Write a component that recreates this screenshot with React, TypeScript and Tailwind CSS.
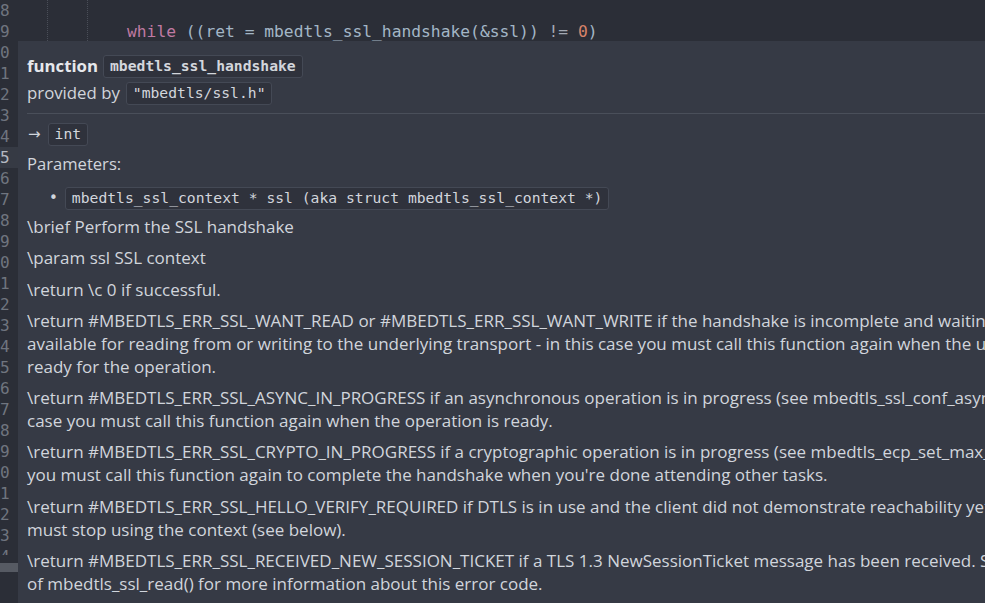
import React from "react";

const gutterDigits = ["8","9","0","1","2","3","4","5","6","7","8","9","0","1","2","3","4","5","6","7","8","9","0","1","2","3","4"];

const paras: string[][] = [
  ["\\brief Perform the SSL handshake"],
  ["\\param ssl SSL context"],
  ["\\return \\c 0 if successful."],
  [
    "\\return #MBEDTLS_ERR_SSL_WANT_READ or #MBEDTLS_ERR_SSL_WANT_WRITE if the handshake is incomplete and waiting for data to be",
    "available for reading from or writing to the underlying transport - in this case you must call this function again when the underlying transport is",
    "ready for the operation.",
  ],
  [
    "\\return #MBEDTLS_ERR_SSL_ASYNC_IN_PROGRESS if an asynchronous operation is in progress (see mbedtls_ssl_conf_async_private_cb()) - in this",
    "case you must call this function again when the operation is ready.",
  ],
  [
    "\\return #MBEDTLS_ERR_SSL_CRYPTO_IN_PROGRESS if a cryptographic operation is in progress (see mbedtls_ecp_set_max_ops()) - in this case",
    "you must call this function again to complete the handshake when you're done attending other tasks.",
  ],
  [
    "\\return #MBEDTLS_ERR_SSL_HELLO_VERIFY_REQUIRED if DTLS is in use and the client did not demonstrate reachability yet - in this case you",
    "must stop using the context (see below).",
  ],
  [
    "\\return #MBEDTLS_ERR_SSL_RECEIVED_NEW_SESSION_TICKET if a TLS 1.3 NewSessionTicket message has been received. See the documentation",
    "of mbedtls_ssl_read() for more information about this error code.",
  ],
];

function Chip({ children, bold }: { children: React.ReactNode; bold?: boolean }) {
  return (
    <span
      className={
        "inline-flex items-center h-[23px] px-[6px] rounded-[3px] border border-[#444955] bg-[#2f323c] text-[#d3d6dc] font-['DejaVu_Sans_Mono',monospace] text-[14.7px] leading-none whitespace-nowrap " +
        (bold ? "font-bold" : "")
      }
    >
      {children}
    </span>
  );
}

export default function App() {
  return (
    <div className="relative w-[985px] h-[603px] overflow-hidden bg-[#2b2e37] flex font-['Open_Sans',sans-serif]">
      {/* gutter */}
      <div className="w-[18px] shrink-0 flex flex-col">
        <div className="h-[555px] overflow-hidden flex flex-col">
          {gutterDigits.map((d, i) => (
            <div
              key={i}
              className={
                "h-[21px] shrink-0 leading-[21px] font-['DejaVu_Sans_Mono',monospace] text-[16px] " +
                (i === 7 ? "bg-[#363a44] text-[#b4b9c2]" : "text-[#70757f]")
              }
            >
              {d}
            </div>
          ))}
        </div>
        <div className="mt-[8px] h-[9px] bg-[#565a63]" />
      </div>

      {/* code area */}
      <div className="relative flex-1">
        <div className="absolute left-[29px] top-0 bottom-0 border-l border-dotted border-[#4a4e58]" />
        <div className="absolute left-[69px] top-0 bottom-0 border-l border-dotted border-[#4a4e58]" />
        <div className="h-[21px]" />
        <div className="h-[21px] leading-[21px] pl-[109px] font-['DejaVu_Sans_Mono',monospace] text-[16.3px] whitespace-nowrap text-[#a3b6c6]">
          <span className="text-[#c07aa3]">while</span>
          <span> ((ret = mbedtls_ssl_handshake(&amp;ssl)) </span>
          <span className="text-[#a3a9b3]">!=</span>
          <span> </span>
          <span className="text-[#d6836a]">0</span>
          <span>)</span>
        </div>
      </div>

      {/* hover popup */}
      <div className="absolute left-[18px] top-[41px] bottom-0 w-[1400px] bg-[#363a45] pl-[9px] pt-[14px] text-[#d1d5dc] text-[17px]">
        <div className="flex items-center h-[23px]">
          <span className="font-bold text-[#e6e8ec] mr-[5px] leading-none text-[16.8px]">function</span>
          <Chip bold>mbedtls_ssl_handshake</Chip>
        </div>
        <div className="flex items-center h-[23px] mt-[4px]">
          <span className="mr-[6px] leading-none text-[16.8px]">provided by</span>
          <Chip>"mbedtls/ssl.h"</Chip>
        </div>
        <div className="mt-[8px] border-t border-[#4a4f5a]" />
        <div className="flex items-center h-[23px] mt-[9px]">
          <span className="mr-[7px] ml-[1px] leading-none text-[15px] font-['DejaVu_Sans',sans-serif]">→</span>
          <Chip>int</Chip>
        </div>
        <div className="h-[23px] leading-[23px] mt-[6px] text-[16.6px]">Parameters:</div>
        <div className="flex items-center h-[24px] mt-[11px] pl-[22px]">
          <span className="mr-[7px] text-[15px] leading-none font-['DejaVu_Sans',sans-serif]">•</span>
          <Chip>mbedtls_ssl_context * ssl (aka struct mbedtls_ssl_context *)</Chip>
        </div>
        <div className="mt-[5px] flex flex-col gap-[8.3px]">
          {paras.map((p, i) => (
            <div key={i} className="flex flex-col">
              {p.map((l, j) => (
                <div key={j} className="h-[23px] leading-[23px] whitespace-nowrap">
                  {l}
                </div>
              ))}
            </div>
          ))}
        </div>
      </div>
    </div>
  );
}
